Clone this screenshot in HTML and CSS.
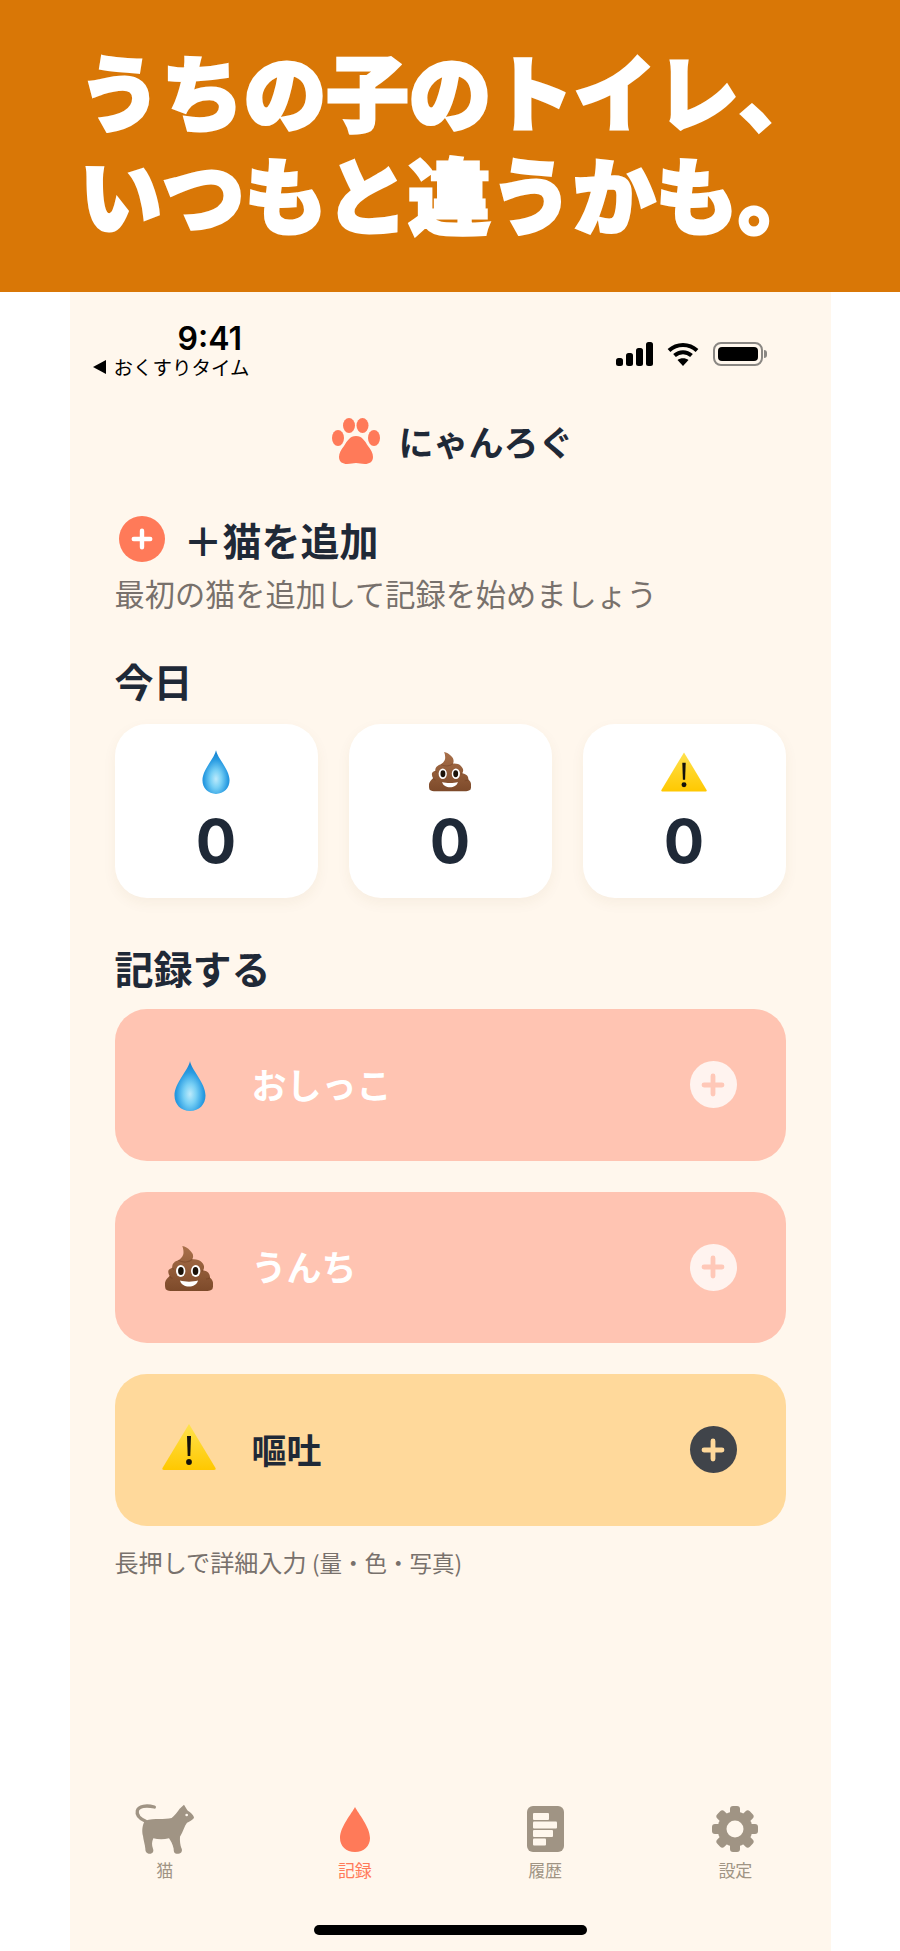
FILE: index.html
```html
<!DOCTYPE html>
<html lang="ja">
<head>
<meta charset="utf-8">
<title>にゃんろぐ</title>
<link rel="stylesheet" href="styles.css">
</head>
<body>
<svg class="defs" width="0" height="0" aria-hidden="true">
  <defs>
    <radialGradient id="dropFill" cx="50%" cy="66%" r="58%">
      <stop offset="0" stop-color="#bdeafb"/>
      <stop offset=".35" stop-color="#78d0f5"/>
      <stop offset=".75" stop-color="#2a9ce2"/>
      <stop offset="1" stop-color="#1a88d4"/>
    </radialGradient>
    <linearGradient id="poopFill" x1="0" y1="0" x2="0" y2="1">
      <stop offset="0" stop-color="#a9704a"/>
      <stop offset="1" stop-color="#7d4a2a"/>
    </linearGradient>
    <linearGradient id="warnFill" x1="0" y1="0" x2="0" y2="1">
      <stop offset="0" stop-color="#ffe14d"/>
      <stop offset="1" stop-color="#ffc800"/>
    </linearGradient>
    <symbol id="e-drop" viewBox="0 0 32 50">
      <path fill="url(#dropFill)" d="M16 0C17.500 9 31.500 22 31.500 34.500C31.500 43.500 25 50 16 50C7 50 .500 43.500 .500 34.500C.500 22 14.500 9 16 0Z"/>
    </symbol>
    <symbol id="e-poop" viewBox="0 0 48 46">
      <path fill="url(#poopFill)" d="M17.300 0C20 .500 23 2 25 4.500C27 6.500 28 8 28 9.500C28.300 11 28 12 27.300 13.300C31 13 34.500 13.800 36.500 16C38.500 18 39.300 20 39 21.700C39 22.800 38.600 23.600 38 24.300C41 25 43.300 26 44 27.700C44.800 29 45 30.500 45 31.700C46.500 33 48 35 48 36.700C48.300 39.500 48 41.500 47.300 43.300C45 44.800 43 45 40.700 45H7.300C5 45 2.500 44.800 .700 43.300C0 41.500 -.200 39 0 36.700C.500 34 2.500 32 4.700 30C3.600 28.500 3.200 26.800 3.300 25C3.500 23.500 5 22.500 7.300 21.700C7 20 7.500 18 9 16.700C10 15.500 11.500 14.800 13.300 14.300C15.500 13 17.500 11 18.300 8.300C18.800 5.500 18.300 2.500 17.300 0Z"/>
      <path fill="none" stroke="#6f3f22" stroke-opacity=".45" stroke-width="1.200" d="M13.300 14.300C18 17 24 16.500 27.300 13.300M7.300 21.700C7.500 22.500 8 23 9 23.500M38 24.300C37.500 25 37 25.300 36.500 25.500M4.700 30C5 31 6 32 7.500 32.500M45 31.700C44 32.500 42.500 33 41 33"/>
      <ellipse cx="15.700" cy="25" rx="4.700" ry="6" fill="#fff"/>
      <ellipse cx="30.700" cy="25" rx="4.700" ry="6" fill="#fff"/>
      <ellipse cx="15.900" cy="25" rx="2.800" ry="3.900" fill="#1c1208"/>
      <ellipse cx="30.500" cy="25" rx="2.800" ry="3.900" fill="#1c1208"/>
      <path fill="#fff" d="M15 34.500C20 36 28 36 33 34.500C32 38.800 28 40.500 24 40.500C20 40.500 16 38.800 15 34.500Z"/>
    </symbol>
    <symbol id="e-warn" viewBox="0 0 54 46">
      <path fill="url(#warnFill)" d="M27 0L53.500 44C54 45 53.500 46 52 46H2C.500 46 0 45 .500 44Z"/>
      <path fill="#14120c" d="M25 12H29L28.300 32H25.700Z"/>
      <circle cx="27" cy="38" r="2.900" fill="#14120c"/>
    </symbol>
    <symbol id="i-plus" viewBox="0 0 20 20">
      <path d="M10 2.500V17.500M2.500 10H17.500" fill="none" stroke="currentColor" stroke-width="4" stroke-linecap="round"/>
    </symbol>
  </defs>
</svg>

<header class="banner">
  <h1 class="headline">うちの子のトイレ、<br>いつもと違うかも。</h1>
</header>

<main class="phone">
  <div class="status">
    <div class="status-left">
      <span class="clock">9:41</span>
      <span class="back"><span class="back-arrow"></span>おくすりタイム</span>
    </div>
    <div class="status-right">
      <svg class="signal" viewBox="0 0 37 24" width="37" height="24">
        <rect x="0" y="16" width="7" height="8" rx="2.500"/>
        <rect x="10" y="11" width="7" height="13" rx="2.500"/>
        <rect x="20" y="6" width="7" height="18" rx="2.500"/>
        <rect x="30" y="0" width="7" height="24" rx="2.500"/>
      </svg>
      <svg class="wifi" viewBox="0 0 32 24" width="32" height="24">
        <path d="M2 8.500C10 1 22 1 30 8.500" fill="none" stroke="#000" stroke-width="4"/>
        <path d="M7.500 13.500C12.500 9 19.500 9 24.500 13.500" fill="none" stroke="#000" stroke-width="4"/>
        <path d="M16 24L10.500 18C13.500 15.500 18.500 15.500 21.500 18Z" fill="#000"/>
      </svg>
      <span class="battery"><span class="battery-level"></span></span>
    </div>
  </div>

  <div class="app-title">
    <svg class="paw" viewBox="0 0 48 46" width="48" height="46">
      <ellipse cx="17" cy="7.500" rx="6" ry="7.500" fill="#ff7a59"/>
      <ellipse cx="30.500" cy="7.500" rx="6" ry="7.500" fill="#ff7a59"/>
      <ellipse cx="6" cy="20" rx="6" ry="8" fill="#ff7a59"/>
      <ellipse cx="42" cy="20" rx="6" ry="8" fill="#ff7a59"/>
      <path fill="#ff7a59" d="M24 18C30 18 33 23 36 28C39 32 41 35 41 39C41 44 37 46 33 46C29 46 27 45 24 45C21 45 19 46 15 46C11 46 7 44 7 39C7 35 9 32 12 28C15 23 18 18 24 18Z"/>
    </svg>
    <span class="app-name">にゃんろぐ</span>
  </div>

  <section class="add-cat">
    <div class="add-row">
      <span class="add-dot"><svg class="add-plus"><use href="#i-plus"/></svg></span>
      <span class="add-label">＋猫を追加</span>
    </div>
    <p class="add-sub">最初の猫を追加して記録を始めましょう</p>
  </section>

  <h2 class="section-title today-title">今日</h2>
  <div class="stats">
    <div class="stat"><svg class="stat-drop"><use href="#e-drop"/></svg><span class="stat-num">0</span></div>
    <div class="stat"><svg class="stat-poop"><use href="#e-poop"/></svg><span class="stat-num">0</span></div>
    <div class="stat"><svg class="stat-warn"><use href="#e-warn"/></svg><span class="stat-num">0</span></div>
  </div>

  <h2 class="section-title record-title">記録する</h2>
  <div class="actions">
    <div class="action action-coral">
      <span class="action-icon"><svg class="big-drop"><use href="#e-drop"/></svg></span>
      <span class="action-label">おしっこ</span>
      <span class="action-plus"><svg class="plus-mark"><use href="#i-plus"/></svg></span>
    </div>
    <div class="action action-coral">
      <span class="action-icon"><svg class="big-poop"><use href="#e-poop"/></svg></span>
      <span class="action-label">うんち</span>
      <span class="action-plus"><svg class="plus-mark"><use href="#i-plus"/></svg></span>
    </div>
    <div class="action action-amber">
      <span class="action-icon"><svg class="big-warn"><use href="#e-warn"/></svg></span>
      <span class="action-label">嘔吐</span>
      <span class="action-plus"><svg class="plus-mark"><use href="#i-plus"/></svg></span>
    </div>
  </div>
  <p class="hint">長押しで詳細入力 <span class="hint-note">(量・色・写真)</span></p>

  <nav class="tabs">
    <div class="tab">
      <svg class="tab-icon" viewBox="0 15 240 168" width="80" height="56">
        <path fill="none" stroke="#a09484" stroke-width="10" stroke-linecap="round" d="M62 76C44 68 34 56 37 44C41 30 64 27 88 33"/>
        <path fill="#a09484" d="M60 74C90 65 118 72 140 66C149 58 157 48 164 38L177 26L187 43C197 50 207 58 207 66C200 74 192 78 186 80C178 90 175 105 165 122C164 135 166 148 169 156C173 162 171 173 160 173C148 174 146 168 146 158C143 145 138 135 132 127C115 131 98 130 85 127C80 138 80 148 84 158C87 165 84 173 74 173C64 173 61 166 61 158C60 145 55 132 54 120C50 105 52 85 60 74Z"/>
        <circle cx="185" cy="57" r="4" fill="#fff7ed"/>
      </svg>
      <span class="tab-label">猫</span>
    </div>
    <div class="tab tab-active">
      <svg class="tab-icon" viewBox="0 -6 30 56" width="30" height="56">
        <path fill="#ff7a59" d="M15 0C18 6 30 20 30 31C30 39 24 45 15 45C6 45 0 39 0 31C0 20 12 6 15 0Z"/>
      </svg>
      <span class="tab-label">記録</span>
    </div>
    <div class="tab">
      <svg class="tab-icon" viewBox="0 -5 37 56" width="37" height="56">
        <rect x="0" y="0" width="37" height="46" rx="6" fill="#a09484"/>
        <rect x="6" y="7" width="16" height="7" rx="1" fill="#fff7ed"/>
        <rect x="6" y="15.500" width="24" height="7" rx="1" fill="#fff7ed"/>
        <rect x="6" y="24" width="20" height="7" rx="1" fill="#fff7ed"/>
        <rect x="6" y="32.500" width="13" height="7" rx="1" fill="#fff7ed"/>
      </svg>
      <span class="tab-label">履歴</span>
    </div>
    <div class="tab">
      <svg class="tab-icon" viewBox="-23 -28 46 56" width="46" height="56">
        <g fill="#a09484">
          <circle r="17.500"/>
          <rect x="-5" y="-23" width="10" height="46" rx="3"/>
          <rect x="-5" y="-23" width="10" height="46" rx="3" transform="rotate(45)"/>
          <rect x="-5" y="-23" width="10" height="46" rx="3" transform="rotate(90)"/>
          <rect x="-5" y="-23" width="10" height="46" rx="3" transform="rotate(135)"/>
        </g>
        <circle r="8.500" fill="#fff7ed"/>
      </svg>
      <span class="tab-label">設定</span>
    </div>
  </nav>
  <div class="home-bar"></div>
</main>
</body>
</html>
```
FILE: styles.css
```css
* { box-sizing: border-box; }
html, body { margin: 0; padding: 0; }
body {
  width: 900px;
  height: 1951px;
  background: #fff;
  font-family: "Noto Sans CJK JP", "Noto Sans", sans-serif;
  color: #1f2937;
  overflow: hidden;
}
.defs { position: absolute; }
svg { display: block; }

.banner {
  height: 292px;
  padding-bottom: 10px;
  background: #d97706;
  display: flex;
  align-items: center;
  justify-content: center;
}
.headline {
  margin: 0;
  color: #fff;
  font-size: 82.5px;
  font-weight: 900;
  line-height: 103px;
  text-align: center;
  -webkit-text-stroke: 3px #fff;
}

.phone {
  width: 761px;
  height: 1659px;
  margin: 0 auto;
  padding: 0 45px;
  background: #fff7ed;
  display: flex;
  flex-direction: column;
}

.status {
  height: 88px;
  margin-left: -22px;
  padding-top: 30px;
  display: flex;
  justify-content: space-between;
}
.status-left { display: flex; flex-direction: column; align-items: flex-start; width: 158px; }
.clock {
  margin-left: 85px;
  font-family: Inter, "Liberation Sans", sans-serif;
  font-size: 32px;
  font-weight: 600;
  line-height: 34px;
  color: #000;
}
.back {
  display: flex;
  align-items: center;
  gap: 8px;
  font-size: 19.5px;
  line-height: 22px;
  color: #000;
  white-space: nowrap;
}
.back-arrow {
  width: 0;
  height: 0;
  border-style: solid;
  border-width: 7px 13px 7px 0;
  border-color: transparent #000 transparent transparent;
}
.status-right { display: flex; gap: 14px; padding-top: 20px; padding-right: 23px; align-items: flex-start; }
.battery {
  width: 50px;
  height: 24px;
  padding: 3px;
  border: 2px solid #8a8783;
  border-radius: 8px;
  background: #fff7ed;
  position: relative;
}
.battery::after {
  content: "";
  position: absolute;
  right: -6px;
  top: 6px;
  width: 3px;
  height: 8px;
  border-radius: 0 3px 3px 0;
  background: #8a8783;
}
.battery-level { display: block; height: 100%; background: #000; border-radius: 4px; }

.app-title {
  margin-top: 38px;
  padding-left: 6px;
  display: flex;
  justify-content: center;
  align-items: center;
  gap: 18px;
  height: 46px;
}
.app-name { font-size: 35px; font-weight: 700; line-height: 46px; }

.add-cat { margin-top: 52px; }
.add-row { display: flex; align-items: center; gap: 19px; padding-left: 4px; height: 46px; }
.add-dot {
  width: 46px;
  height: 46px;
  border-radius: 50%;
  background: #ff7a59;
  color: #fff;
  display: flex;
  align-items: center;
  justify-content: center;
}
.add-plus { width: 22px; height: 22px; }
.add-label { font-size: 39px; font-weight: 700; line-height: 46px; }
.add-sub { margin: 11px 0 0; font-size: 30.2px; line-height: 40px; color: #78716c; white-space: nowrap; }

.section-title { margin: 0; font-size: 39px; font-weight: 700; line-height: 48px; }
.today-title { margin-top: 43px; }
.record-title { margin-top: 45px; }

.stats { margin-top: 20px; display: grid; grid-template-columns: repeat(3, 1fr); gap: 31px; }
.stat {
  height: 174px;
  background: #fff;
  border-radius: 32px;
  box-shadow: 0 5px 14px rgba(120, 80, 40, 0.06);
  display: flex;
  flex-direction: column;
  align-items: center;
  padding-top: 26px;
}
.stat-drop, .stat-poop, .stat-warn { height: 44px; }
.stat-drop { width: 28px; }
.stat-poop { width: 42px; }
.stat-warn { width: 46px; }
.stat-num {
  margin-top: 11px;
  font-family: Inter, "Liberation Sans", sans-serif;
  font-size: 60px;
  font-weight: 700;
  line-height: 72px;
}

.actions { margin-top: 18px; display: flex; flex-direction: column; gap: 31px; }
.action {
  height: 151.5px;
  border-radius: 32px;
  display: flex;
  align-items: center;
  padding: 0 49px 0 43px;
}
.action-coral { background: #ffc4b2; color: #fff; }
.action-amber { background: #ffd99b; color: #1f2937; }
.action-icon { width: 94px; display: flex; justify-content: flex-start; }
.big-drop { width: 32px; height: 50px; margin-top: 2px; margin-left: 16px; }
.big-poop { width: 48px; height: 46px; margin-top: 4px; margin-left: 7px; }
.big-warn { width: 54px; height: 46px; margin-bottom: 6px; margin-left: 4px; }
.action-label { flex: 1; padding-bottom: 2px; font-size: 35px; font-weight: 700; line-height: 46px; }
.action-plus {
  width: 47px;
  height: 47px;
  border-radius: 50%;
  display: flex;
  align-items: center;
  justify-content: center;
}
.action-coral .action-plus { background: #fff3ef; color: #ffc8b8; }
.action-amber .action-plus { background: #40444a; color: #ffd99b; }
.plus-mark { width: 24px; height: 24px; }

.hint { margin: 20px 0 0; font-size: 24.1px; line-height: 32px; color: #78716c; white-space: nowrap; }
.hint-note { font-size: 22.5px; }

.tabs {
  margin: auto -45px 0;
  display: grid;
  grid-template-columns: repeat(4, 1fr);
}
.tab { display: flex; flex-direction: column; align-items: center; color: #a09484; }
.tab-active { color: #ff7a59; }
.tab-label { margin-top: 1px; font-size: 17px; line-height: 24px; }

.home-bar {
  width: 273px;
  height: 10px;
  margin: 43px auto 16px;
  border-radius: 5px;
  background: #000;
}
```
